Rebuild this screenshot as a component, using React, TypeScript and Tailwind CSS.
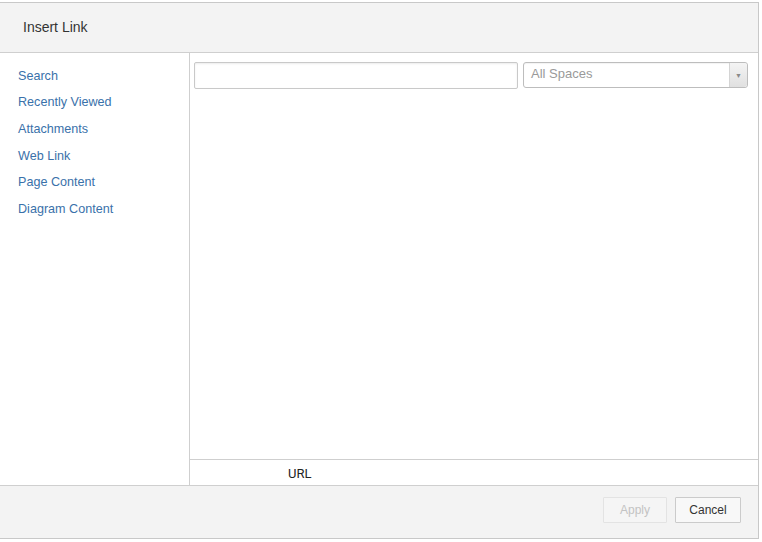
import React from "react";

const navItems = [
  "Search",
  "Recently Viewed",
  "Attachments",
  "Web Link",
  "Page Content",
  "Diagram Content",
];

const App = (): JSX.Element => {
  return (
    <div className="w-[762px] h-[542px] bg-white overflow-hidden font-['Liberation_Sans',Arial,sans-serif]">
      <div className="mt-[2px] w-[759px] h-[537px] flex flex-col border-t border-r border-b border-[#c8c8c8] bg-white">
        {/* header */}
        <div className="h-[50px] shrink-0 bg-[#f3f3f3] border-b border-[#cfcfcf] flex items-center pl-[23px]">
          <span className="text-[14px] text-[#333]">Insert Link</span>
        </div>

        {/* body */}
        <div className="flex flex-1 min-h-0">
          <div className="w-[190px] shrink-0 border-r border-[#cfcfcf] pt-[10px] pl-[18px]">
            {navItems.map((item) => (
              <div key={item} className="h-[26.6px] flex items-center text-[12.6px] text-[#3a71aa]">
                {item}
              </div>
            ))}
          </div>

          <div className="flex-1 flex flex-col min-w-0">
            <div className="flex-1 pt-[9px] pl-[4px] flex items-start gap-[5px]">
              <div className="w-[324px] h-[27px] border border-[#c9c9c9] rounded-[2px] bg-white shadow-[inset_0_1px_2px_rgba(0,0,0,0.08)]" />
              <div className="w-[225px] h-[26px] border border-[#bdbdbd] rounded-[3px] flex items-center bg-white shadow-[inset_0_1px_1px_rgba(0,0,0,0.05)]">
                <span className="flex-1 pl-[7px] pb-[2px] text-[13px] text-[#9a9a9a]">All Spaces</span>
                <div className="w-[18px] h-full border-l border-[#d4d4d4] bg-gradient-to-b from-[#f4f4f4] to-[#e0e0e0] rounded-r-[3px] flex items-center justify-center">
                  <span className="text-[#8a8a8a] text-[7px] leading-none">▼</span>
                </div>
              </div>
            </div>
            <div className="h-[26px] shrink-0 border-t border-[#cfcfcf] flex items-center pl-[98px] pt-[3px]">
              <span className="text-[13px] text-[#222] font-['Roboto',sans-serif]">URL</span>
            </div>
          </div>
        </div>

        {/* footer */}
        <div className="h-[53px] shrink-0 bg-[#f3f3f3] border-t border-[#cfcfcf] flex items-start justify-end gap-[8px] pr-[17px] pt-[11px]">
          <button className="w-[64px] h-[26px] border border-[#e3e3e3] bg-[#f5f5f5] text-[12px] text-[#c3c3c3] rounded-[1px]">
            Apply
          </button>
          <button className="w-[66px] h-[26px] border border-[#cbcbcb] bg-[#f8f8f8] text-[12px] text-[#333] rounded-[1px]">
            Cancel
          </button>
        </div>
      </div>
    </div>
  );
};

export default App;
